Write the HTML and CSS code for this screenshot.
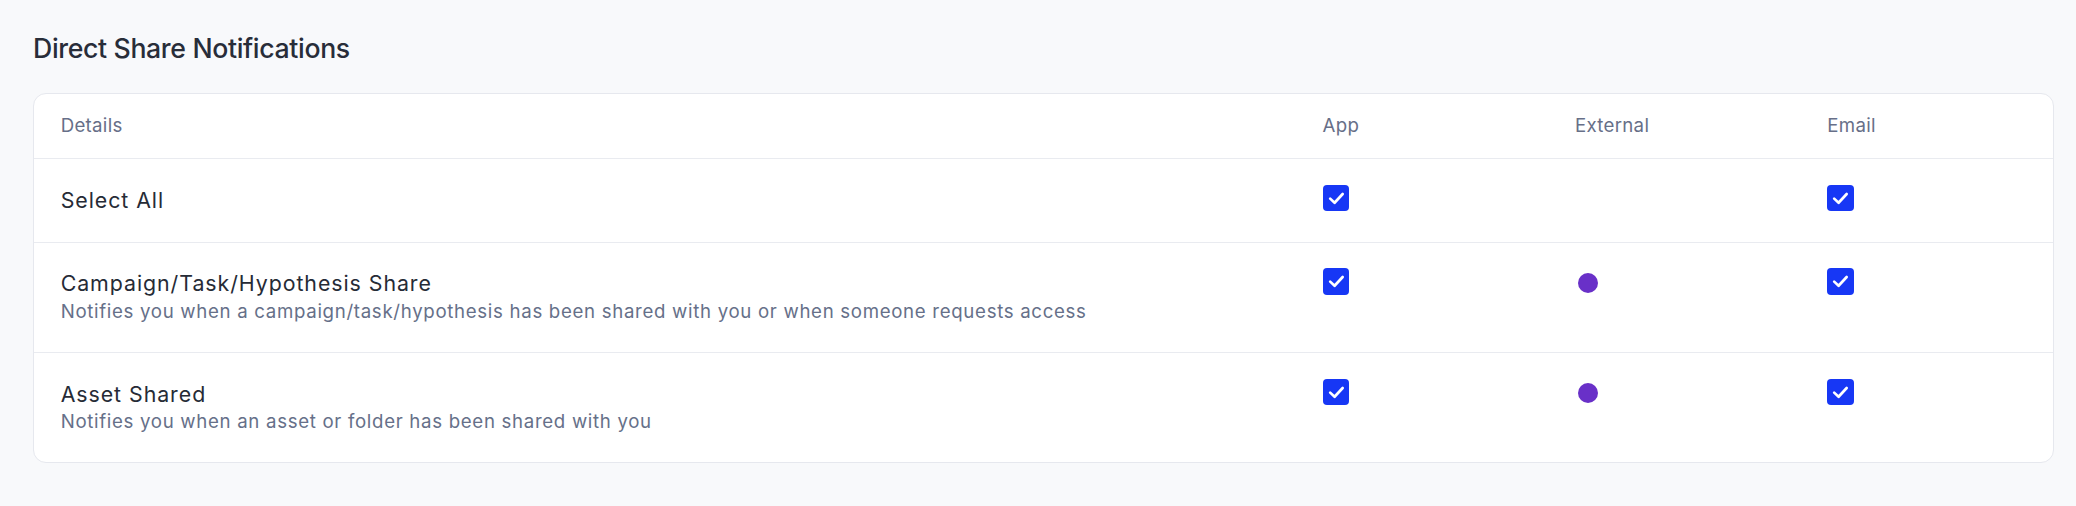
FILE: index.html
```html
<!DOCTYPE html>
<html lang="en">
<head>
<meta charset="utf-8">
<title>Direct Share Notifications</title>
<link rel="stylesheet" href="styles.css">
</head>
<body>
<main class="page">
  <h1 class="title">Direct Share Notifications</h1>
  <section class="card">
    <div class="row head">
      <div class="cell">Details</div>
      <div class="cell">App</div>
      <div class="cell">External</div>
      <div class="cell">Email</div>
    </div>
    <div class="row">
      <div class="cell detail"><div class="name">Select All</div></div>
      <div class="cell"><span class="check"><svg viewBox="0 0 26 26"><path d="M7 13.3 L11.3 17.3 L19.2 8.8"/></svg></span></div>
      <div class="cell"></div>
      <div class="cell"><span class="check"><svg viewBox="0 0 26 26"><path d="M7 13.3 L11.3 17.3 L19.2 8.8"/></svg></span></div>
    </div>
    <div class="row">
      <div class="cell detail">
        <div class="name">Campaign/Task/Hypothesis Share</div>
        <div class="desc">Notifies you when a campaign/task/hypothesis has been shared with you or when someone requests access</div>
      </div>
      <div class="cell"><span class="check"><svg viewBox="0 0 26 26"><path d="M7 13.3 L11.3 17.3 L19.2 8.8"/></svg></span></div>
      <div class="cell"><span class="dot-box"><span class="dot"></span></span></div>
      <div class="cell"><span class="check"><svg viewBox="0 0 26 26"><path d="M7 13.3 L11.3 17.3 L19.2 8.8"/></svg></span></div>
    </div>
    <div class="row last">
      <div class="cell detail">
        <div class="name">Asset Shared</div>
        <div class="desc">Notifies you when an asset or folder has been shared with you</div>
      </div>
      <div class="cell"><span class="check"><svg viewBox="0 0 26 26"><path d="M7 13.3 L11.3 17.3 L19.2 8.8"/></svg></span></div>
      <div class="cell"><span class="dot-box"><span class="dot"></span></span></div>
      <div class="cell"><span class="check"><svg viewBox="0 0 26 26"><path d="M7 13.3 L11.3 17.3 L19.2 8.8"/></svg></span></div>
    </div>
  </section>
</main>
</body>
</html>
```

FILE: styles.css
```css
* { box-sizing: border-box; }

html, body {
  margin: 0;
  padding: 0;
  background: #f8f9fb;
  font-family: Inter, "Noto Sans", "Liberation Sans", sans-serif;
}

.page {
  padding: 32px 22px 44px 33px;
}

.title {
  margin: 0 0 29px 0;
  font-size: 26.67px;
  line-height: 32px;
  font-weight: 500;
  letter-spacing: -0.35px;
  color: #282d39;
}

.card {
  background: #ffffff;
  border: 1px solid #e6e8ee;
  border-radius: 13px;
}

.row {
  display: grid;
  grid-template-columns: 62.5% 12.5% 12.5% 12.5%;
  border-bottom: 1px solid #e9ebf0;
}

.row.last {
  border-bottom: none;
}

.cell {
  padding: 26.67px 0 26.67px 26.67px;
}

.head .cell {
  padding-top: 21.33px;
  padding-bottom: 21.33px;
  font-size: 18.67px;
  line-height: 21.33px;
  letter-spacing: 0.3px;
  color: #676f88;
}

.name {
  font-size: 21.33px;
  line-height: 29.33px;
  letter-spacing: 0.95px;
  color: #262b36;
}

.desc {
  font-size: 18.67px;
  line-height: 26.67px;
  letter-spacing: 0.68px;
  color: #667089;
}

.check {
  display: block;
  width: 26.67px;
  height: 26.67px;
  margin-top: -1px;
  border-radius: 4px;
  background: #1737f5;
}

.check svg {
  display: block;
  width: 100%;
  height: 100%;
}

.check path {
  fill: none;
  stroke: #ffffff;
  stroke-width: 2.6;
  stroke-linecap: round;
  stroke-linejoin: round;
}

.dot-box {
  display: flex;
  align-items: center;
  justify-content: center;
  width: 26.67px;
  height: 26.67px;
}

.dot {
  width: 20px;
  height: 20px;
  border-radius: 50%;
  background: #6930c8;
}
```
